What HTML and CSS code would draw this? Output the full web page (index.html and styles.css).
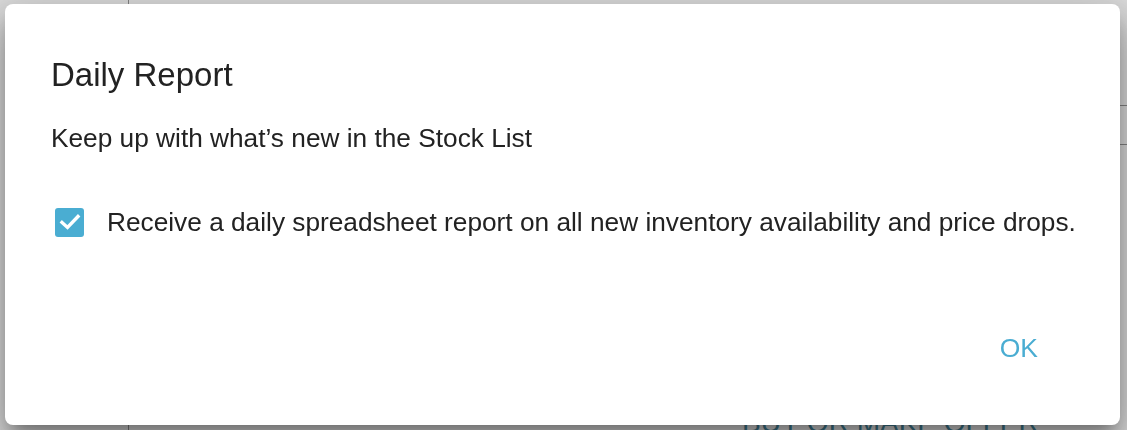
FILE: index.html
```html
<!DOCTYPE html>
<html lang="en">
<head>
  <meta charset="UTF-8" />
  <title>Daily Report</title>
  <link rel="stylesheet" href="styles.css">
</head>
<body>
  <div class="page">
    <div class="sidebar"></div>
    <div class="main">
      <div class="row"></div>
      <div class="row"></div>
      <div class="buy-btn">BUY OR MAKE OFFER</div>
    </div>
  </div>

  <div class="backdrop">
    <div class="dialog">
      <h2 class="dialog-title">Daily Report</h2>
      <p class="dialog-sub">Keep up with what&rsquo;s new in the Stock List</p>
      <label class="check-row">
        <span class="check">
          <svg width="22" height="18" viewBox="0 0 22 18"><path d="M3 9.5 L8.5 14.5 L19 3.5" fill="none" stroke="#fff" stroke-width="3.4" stroke-linecap="square"/></svg>
        </span>
        <span class="check-label">Receive a daily spreadsheet report on all new inventory availability and price drops.</span>
      </label>
      <div class="actions">
        <button class="ok-btn">OK</button>
      </div>
    </div>
  </div>
</body>
</html>
```

FILE: styles.css
```css
html, body {
  margin: 0;
  padding: 0;
  height: 100%;
  overflow: hidden;
}

body {
  background: #fff;
  font-family: 'Liberation Sans', Arial, sans-serif;
  color: #222;
}

/* page behind the dialog */
.page {
  display: flex;
  height: 100%;
}

.sidebar {
  width: 128px;
  border-right: 1px solid #999;
}

.main {
  flex: 1;
  position: relative;
}

.row {
  height: 38px;
  border-bottom: 1px solid #999;
}

.row:first-child {
  margin-top: 67px;
}

.buy-btn {
  position: absolute;
  left: 613px;
  top: 407px;
  font-size: 28px;
  color: #4a8fa8;
}

/* modal */
.backdrop {
  position: fixed;
  inset: 0;
  background: rgba(0, 0, 0, 0.14);
  padding: 4px 7px 0 5px;
}

.dialog {
  background: #fff;
  border-radius: 8px;
  height: 421px;
  box-sizing: border-box;
  padding: 52px 36px 0 46px;
  box-shadow: 0 11px 15px -7px rgba(0,0,0,0.3), 0 24px 38px 3px rgba(0,0,0,0.24), 0 9px 46px 8px rgba(0,0,0,0.16);
}

.dialog-title {
  margin: 0;
  font-size: 33px;
  font-weight: normal;
  color: #222;
  line-height: 38px;
}

.dialog-sub {
  margin: 29px 0 0;
  font-size: 26.25px;
  line-height: 30px;
  color: #222;
}

.check-row {
  display: flex;
  align-items: center;
  margin-top: 54px;
  padding-left: 4px;
}

.check {
  width: 29px;
  height: 29px;
  border-radius: 3px;
  background: #4aadd2;
  display: flex;
  align-items: center;
  justify-content: center;
  flex-shrink: 0;
}

.check-label {
  margin-left: 23px;
  font-size: 26.25px;
  line-height: 30px;
  white-space: nowrap;
  color: #222;
}

.actions {
  display: flex;
  justify-content: flex-end;
  margin-top: 96px;
}

.ok-btn {
  background: none;
  border: none;
  font-family: 'Liberation Sans', Arial, sans-serif;
  font-size: 26.5px;
  line-height: 30px;
  color: #4aadd2;
  padding: 0;
  margin-right: 46px;
}
```
